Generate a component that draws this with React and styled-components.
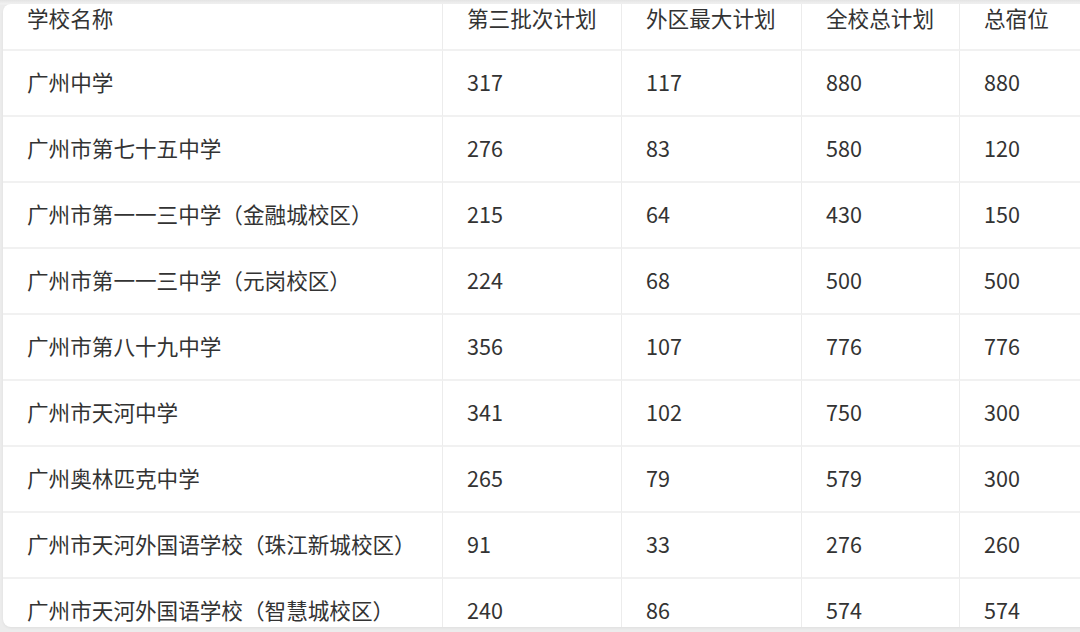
import React from "react";
import styled, { createGlobalStyle } from "styled-components";

const Global = createGlobalStyle`
  html, body { margin: 0; padding: 0; }
  body {
    background: #ececec;
    width: 1080px;
    height: 632px;
    overflow: hidden;
    font-family: "Noto Sans CJK SC", "Noto Sans", sans-serif;
    color: #333;
  }
`;

const Page = styled.div`
  padding: 4px 0 0 3px;
  background: linear-gradient(to bottom, #e4e4e4 0px, #f2f2f2 4px, #ececec 5px);
  height: 632px;
  box-sizing: border-box;
`;

const Card = styled.div`
  width: 1120px;
  height: 623px;
  background: #fff;
  border-radius: 8px;
  overflow: hidden;
  box-shadow: 0 1px 3px rgba(0, 0, 0, 0.06);
`;

const Grid = styled.div`
  display: grid;
  grid-template-columns: 439px 179px 180px 158px 1fr;
`;

const Cell = styled.div`
  box-sizing: border-box;
  height: ${(p) => (p.$head ? "47px" : "66px")};
  padding: ${(p) => (p.$head ? "0 0 0 24px" : "0 0 3px 24px")};
  display: flex;
  align-items: ${(p) => (p.$head ? "flex-start" : "center")};
  border-bottom: 2px solid #f1f1f1;
  border-left: ${(p) => (p.$first ? "none" : "1px solid #ececec")};
  font-size: 21.6px;
  line-height: 28px;
  color: #333;
  white-space: nowrap;
`;

const rows = [
  ["广州中学", "317", "117", "880", "880"],
  ["广州市第七十五中学", "276", "83", "580", "120"],
  ["广州市第一一三中学（金融城校区）", "215", "64", "430", "150"],
  ["广州市第一一三中学（元岗校区）", "224", "68", "500", "500"],
  ["广州市第八十九中学", "356", "107", "776", "776"],
  ["广州市天河中学", "341", "102", "750", "300"],
  ["广州奥林匹克中学", "265", "79", "579", "300"],
  ["广州市天河外国语学校（珠江新城校区）", "91", "33", "276", "260"],
  ["广州市天河外国语学校（智慧城校区）", "240", "86", "574", "574"],
];

const head = ["学校名称", "第三批次计划", "外区最大计划", "全校总计划", "总宿位"];

export default function App() {
  return (
    <>
      <Global />
      <Page>
        <Card>
          <Grid>
            {head.map((h, i) => (
              <Cell key={h} $head $first={i === 0}>
                {h}
              </Cell>
            ))}
            {rows.map((r, ri) =>
              r.map((c, ci) => (
                <Cell key={ri + "-" + ci} $first={ci === 0}>
                  {c}
                </Cell>
              ))
            )}
          </Grid>
        </Card>
      </Page>
    </>
  );
}
